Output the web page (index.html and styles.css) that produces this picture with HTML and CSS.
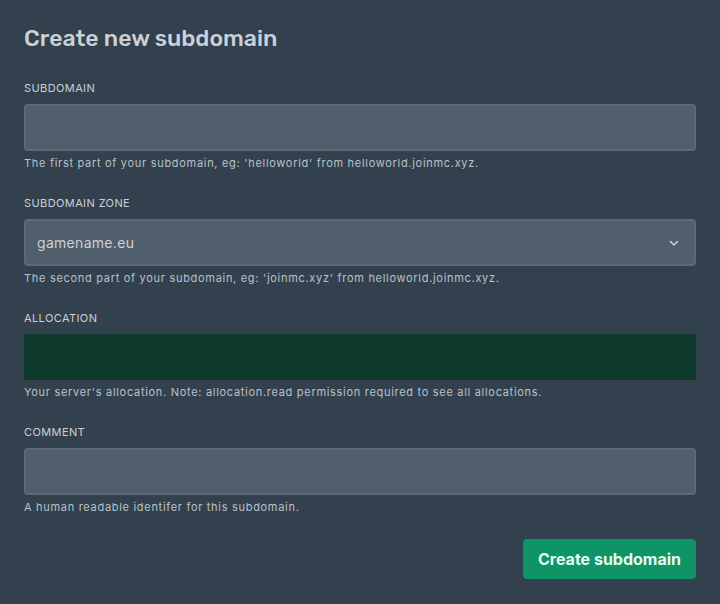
FILE: index.html
```html
<!DOCTYPE html>
<html lang="en">
<head>
<meta charset="utf-8">
<title>Create new subdomain</title>
<link rel="stylesheet" href="styles.css">
</head>
<body>
<div class="panel">
  <h2 class="title">Create new subdomain</h2>
  <div class="field">
    <label class="label">SUBDOMAIN</label>
    <div class="input"></div>
    <p class="help">The first part of your subdomain, eg: 'helloworld' from helloworld.joinmc.xyz.</p>
  </div>
  <div class="field">
    <label class="label">SUBDOMAIN ZONE</label>
    <div class="input select">
      <span class="value">gamename.eu</span>
      <svg class="chevron" width="12" height="12" viewBox="0 0 12 12" aria-hidden="true"><path d="M2.5 4.5 L6 8 L9.5 4.5" fill="none" stroke="#cad1d8" stroke-width="1.6" stroke-linecap="round" stroke-linejoin="round"/></svg>
    </div>
    <p class="help">The second part of your subdomain, eg: 'joinmc.xyz' from helloworld.joinmc.xyz.</p>
  </div>
  <div class="field">
    <label class="label">ALLOCATION</label>
    <div class="alloc"></div>
    <p class="help">Your server's allocation. Note: allocation.read permission required to see all allocations.</p>
  </div>
  <div class="field">
    <label class="label">COMMENT</label>
    <div class="input"></div>
    <p class="help">A human readable identifer for this subdomain.</p>
  </div>
  <div class="actions">
    <button class="btn">Create subdomain</button>
  </div>
</div>
</body>
</html>
```

FILE: styles.css
```css
html, body {
  margin: 0;
  padding: 0;
  background: #33404d;
  width: 720px;
  height: 604px;
  overflow: hidden;
}
body {
  font-family: "Inter", "Open Sans", "Liberation Sans", sans-serif;
  color: #cad1d8;
}
.panel {
  padding: 24px;
  display: flex;
  flex-direction: column;
}
.title {
  margin: 0 0 28px 0;
  font-family: "Rubik", "Inter", "Open Sans", sans-serif;
  font-size: 23px;
  line-height: 28px;
  font-weight: 500;
  color: #cad1d8;
}
.field {
  display: flex;
  flex-direction: column;
  margin-bottom: 24px;
}
.label {
  font-size: 11px;
  line-height: 16px;
  letter-spacing: 0.4px;
  color: #cad1d8;
  margin-bottom: 8px;
}
.input {
  box-sizing: border-box;
  height: 47px;
  background: #515f6c;
  border: 2px solid #5c6a78;
  border-radius: 4px;
}
.select {
  display: flex;
  align-items: center;
  justify-content: space-between;
  padding: 0 14px 0 11px;
}
.value {
  font-size: 14px;
  color: #cad1d8;
  letter-spacing: 0.3px;
}
.chevron {
  display: block;
}
.alloc {
  height: 46px;
  background: #0d3a2c;
}
.help {
  margin: 4px 0 0 0;
  font-size: 11px;
  line-height: 16px;
  letter-spacing: 0.7px;
  color: #b9c2cb;
}
.actions {
  display: flex;
  justify-content: flex-end;
  margin-top: 0;
}
.btn {
  height: 40px;
  width: 173px;
  border: none;
  border-radius: 4px;
  background: #0e9467;
  color: #e3fbef;
  font-family: "Inter", "Open Sans", sans-serif;
  font-weight: 700;
  font-size: 16px;
  cursor: pointer;
}
```
